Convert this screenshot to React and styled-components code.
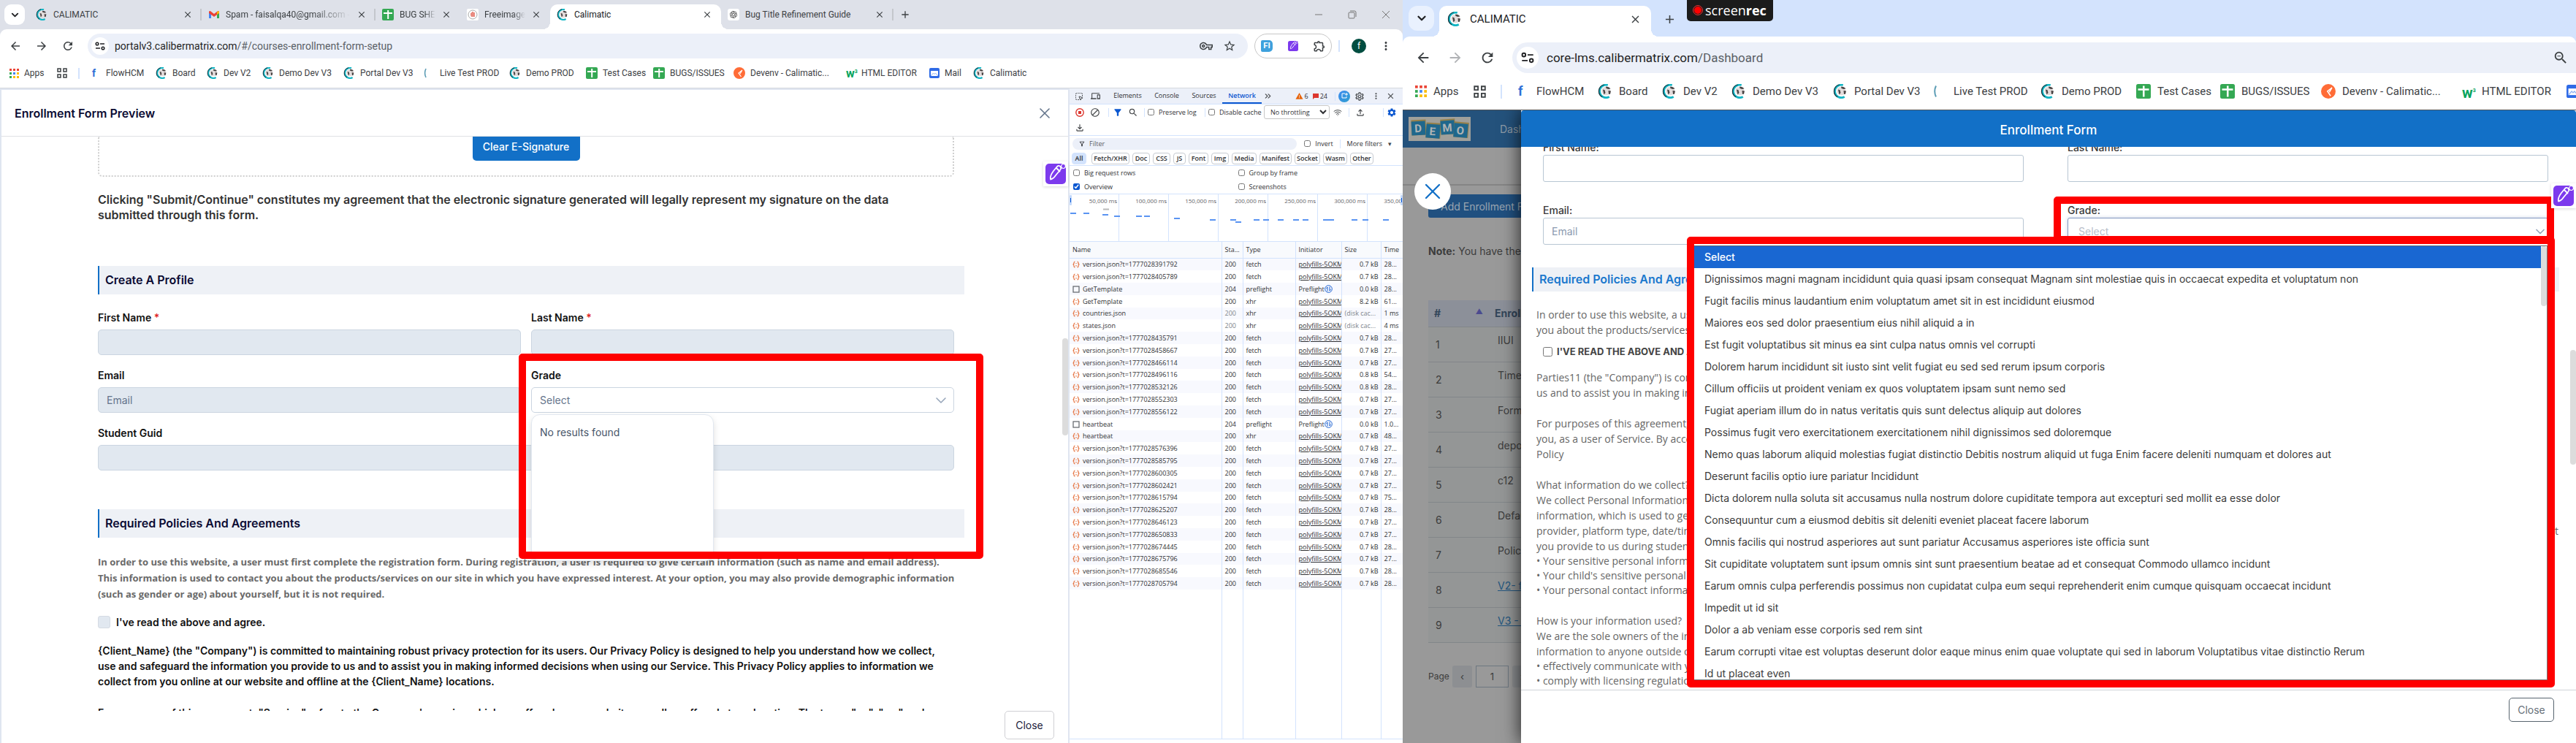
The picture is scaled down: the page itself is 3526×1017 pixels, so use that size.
import React from 'react';
import styled, { createGlobalStyle, css } from 'styled-components';
import {
  MdArrowBack,
  MdArrowForward,
  MdRefresh,
  MdStarBorder,
  MdOutlineExtension,
  MdMoreVert,
  MdClose,
  MdFilterAlt,
  MdOutlineFilterAlt,
  MdSearch,
  MdOutlineSettings,
  MdSettings,
  MdOutlineFileUpload,
  MdOutlineFileDownload,
  MdBlock,
  MdWarning,
  MdDevices,
  MdOutlineVpnKey,
  MdAdd,
  MdZoomOut,
} from 'react-icons/md';
import { RiOpenaiFill } from 'react-icons/ri';
import { ChevronDown, ChevronsRight, Wifi, SquareDashedMousePointer, X } from 'lucide-react';

const uiFont = "Roboto, 'Liberation Sans', sans-serif";
const appFont = "Inter, 'Liberation Sans', sans-serif";
const policyFont = "'Open Sans', 'Noto Sans', sans-serif";

const GlobalStyle = createGlobalStyle`
  * {
    margin: 0;
    padding: 0;
    box-sizing: border-box;
  }

  body {
    overflow: hidden;
    background: #fff;
    font-family: ${uiFont};
  }

  button, input, select {
    font: inherit;
    color: inherit;
  }

  button {
    background: none;
    border: none;
  }

  a {
    color: inherit;
    text-decoration: none;
  }

  svg {
    flex: none;
    display: block;
  }
`;

const Desktop = styled.div`
  display: grid;
  grid-template-columns: 1920fr 1606fr;
  height: 100vh;
`;

const Browser = styled.section`
  display: flex;
  flex-direction: column;
  min-width: 0;
  height: 100vh;
  overflow: hidden;
  color: #3c4043;
`;

/* ---------- browser chrome ---------- */

const TabStrip = styled.div`
  display: flex;
  align-items: stretch;
  position: relative;
  flex: none;
  height: ${p => (p.$large ? '50px' : '40px')};
  padding: ${p => (p.$large ? '8px 0 0 8px' : '6px 0 0 6px')};
  background: ${p => (p.$large ? '#d3e3fd' : '#dee1e9')};
  font-size: ${p => (p.$large ? '15px' : '12px')};
`;

const TabSearch = styled.button`
  display: flex;
  align-items: center;
  justify-content: center;
  flex: none;
  width: ${p => (p.$large ? '35px' : '28px')};
  height: ${p => (p.$large ? '34px' : '28px')};
  margin-right: ${p => (p.$large ? '7px' : '6px')};
  border-radius: ${p => (p.$large ? '12px' : '9px')};
  background: ${p => (p.$large ? '#e9f1fe' : '#fff')};
  color: #202124;
`;

const TabBox = styled.div`
  display: flex;
  align-items: center;
  gap: ${p => (p.$large ? '11px' : '8px')};
  position: relative;
  flex: none;
  width: ${p => p.$width}px;
  padding: ${p => (p.$large ? '0 13px 6px 11px' : '0 12px 6px 9px')};

  ${p => p.$divider && css`
    &::after {
      content: '';
      position: absolute;
      right: 0;
      top: 6px;
      width: 2px;
      height: 16px;
      background: #c4c7cc;
    }
  `}

  ${p => p.$active && css`
    background: #fff;
    border-radius: 10px 10px 0 0;
    color: #202124;

    &::before, &::after {
      content: '';
      position: absolute;
      bottom: 0;
      width: 10px;
      height: 10px;
    }
    &::before {
      left: -10px;
      background: radial-gradient(circle at 0 0, transparent 10px, #fff 10px);
    }
    &::after {
      right: -10px;
      background: radial-gradient(circle at 100% 0, transparent 10px, #fff 10px);
    }
  `}
`;

const TabTitle = styled.span`
  flex: 1;
  min-width: 0;
  overflow: hidden;
  white-space: nowrap;
  mask-image: ${p => (p.$fade ? 'linear-gradient(90deg, #000 70%, transparent)' : 'none')};
`;

const TabClose = styled.button`
  display: flex;
  color: #3c4043;
`;

const NewTab = styled.button`
  display: flex;
  align-items: center;
  padding: 0 ${p => (p.$large ? '16px' : '8px')} 6px;
`;

const WindowButtons = styled.div`
  display: flex;
  align-items: center;
  gap: 34px;
  margin-left: auto;
  padding: 0 17px 6px;
  color: #777;
`;

const ScreenRec = styled.div`
  position: absolute;
  left: 389px;
  top: 0;
  display: flex;
  align-items: center;
  gap: 3px;
  height: 29px;
  padding: 0 9px 2px 8px;
  border-radius: 0 0 5px 5px;
  background: #1b1b1b;
  color: #fff;
  font-family: ${policyFont};
  font-size: 18px;
`;

const ToolbarBack = styled.div`
  flex: none;
  background: ${p => (p.$large ? '#d3e3fd' : '#dee1e9')};
`;

const Toolbar = styled.div`
  display: flex;
  align-items: center;
  height: ${p => (p.$large ? '50px' : '40px')};
  padding: ${p => (p.$large ? '8px 0 0 17px' : '6px 14px 0 12px')};
  border-radius: 9px 9px 0 0;
  background: #fff;
`;

const NavButton = styled.button`
  display: flex;
  width: ${p => (p.$large ? '44px' : '36px')};
  color: ${p => (p.$off ? '#b0b2b5' : '#3c4043')};
`;

const Omnibox = styled.label`
  display: flex;
  align-items: center;
  flex: 1;
  height: ${p => (p.$large ? '42px' : '34px')};
  margin-left: ${p => (p.$large ? '1px' : '0')};
  padding: ${p => (p.$large ? '0 10px 0 6px' : '0 16px 0 5px')};
  border-radius: ${p => (p.$large ? '21px 0 0 21px' : '17px')};
  background: #ecf0f9;
  font-size: ${p => (p.$large ? '17px' : '14px')};
`;

const SiteInfo = styled.span`
  display: flex;
  align-items: center;
  justify-content: center;
  flex: none;
  width: ${p => (p.$large ? '30px' : '24px')};
  height: ${p => (p.$large ? '30px' : '24px')};
  margin-right: ${p => (p.$large ? '11px' : '8px')};
  border-radius: 50%;
  background: #fff;
`;

const Address = styled.span`
  flex: 1;
  color: #1f1f1f;
  white-space: nowrap;

  span {
    color: #5a5f66;
  }
`;

const OmniIcons = styled.span`
  display: flex;
  gap: 14px;
  color: #3c4043;
`;

const Extensions = styled.div`
  display: flex;
  align-items: center;
  justify-content: space-between;
  width: 106px;
  height: 34px;
  margin-left: 9px;
  padding: 0 7px 0 8px;
  border: 1px solid #c7c7c7;
  border-radius: 17px;
`;

const FiBadge = styled.span`
  width: 16px;
  height: 16px;
  border-radius: 2px 5px 5px 2px;
  background: #3ea1dd;
  color: #fff;
  font-size: 11px;
  font-weight: 700;
  line-height: 16px;
  text-align: center;
`;

const ToolbarRule = styled.span`
  width: 2px;
  height: 16px;
  margin: 0 16px 0 9px;
  background: #d3e3fd;
`;

const Avatar = styled.button`
  width: 20px;
  height: 20px;
  margin-right: 18px;
  border-radius: 50%;
  background: #004d40;
  color: #fff;
  font-size: 12px;
`;

const Bookmarks = styled.nav`
  display: flex;
  align-items: center;
  height: ${p => (p.$large ? '50px' : '40px')};
  padding-left: ${p => (p.$large ? '17px' : '13px')};
  overflow: hidden;
  background: #fff;
  font-size: ${p => (p.$large ? '15px' : '12px')};
`;

const Bookmark = styled.a`
  display: flex;
  align-items: center;
  gap: ${p => (p.$large ? '9px' : '7px')};
  flex: none;
  width: ${p => p.$width}px;
  white-space: nowrap;
`;

const BookmarkRule = styled.span`
  flex: none;
  width: 2px;
  height: ${p => (p.$large ? '19px' : '15px')};
  margin-right: ${p => (p.$large ? '22px' : '17px')};
  background: #d3e3fd;
`;

const LetterMark = styled.span`
  width: ${p => p.$size}px;
  color: ${p => p.$color};
  font-size: ${p => p.$size + 2}px;
  font-weight: 700;
  line-height: ${p => p.$size}px;

  sup {
    font-size: 7px;
  }
`;

const CalimaticLogo = ({ size = 16 }) => (
  <svg width={size} height={size} viewBox="0 0 16 16">
    <path d="M11 1.2A7 7 0 1 0 12.6 14" fill="none" stroke="#12b5c4" strokeWidth="2.2" />
    <path d="M7 .8A7.2 7.2 0 0 0 5 14.2" fill="none" stroke="#17343c" strokeWidth="1" />
    <circle cx="9" cy="7.6" r="4.8" fill="#e3dcdc" />
    <path d="M9 2.8c2 0 4 .8 5 2.4l-2.6.4L9 4.6zM11.6 7.2l2.8.4-.8 3.4-1.6.2zM5.6 6l2 .6.8 3-1.6 2z" fill="#4a4444" />
  </svg>
);

const SheetsLogo = ({ size = 16 }) => (
  <svg width={size} height={size} viewBox="0 0 16 16">
    <rect width="16" height="16" rx="2" fill="#34a853" />
    <path d="M2 6h12M8.200 2v12" stroke="#fff" strokeWidth="2" />
  </svg>
);

const GmailLogo = () => (
  <svg width="16" height="16" viewBox="0 0 16 16">
    <path d="M1 4v9h3V7z" fill="#4285f4" />
    <path d="M15 4v9h-3V7z" fill="#34a853" />
    <path d="M1 3.500 2.800 3 8 7l5.200-4L15 3.500V6l-7 5-7-5z" fill="#ea4335" />
    <path d="M12 4.500 14 3l1 1v2l-3 2z" fill="#fbbc04" />
  </svg>
);

const HandLogo = () => (
  <svg width="16" height="16" viewBox="0 0 16 16">
    <rect width="16" height="16" rx="2" fill="#fff" />
    <circle cx="8" cy="8" r="6" fill="none" stroke="#aaa" />
    <path d="M5 6h1V5h1V4h2v1h2v6H6L5 9z" fill="#e98b80" />
  </svg>
);

const GptLogo = () => (
  <svg width="16" height="16" viewBox="0 0 16 16">
    <rect width="16" height="16" rx="3" fill="#fff" />
    <RiOpenaiFill x="2" y="2" size={12} color="#333" />
  </svg>
);

const PostmanLogo = ({ size = 16 }) => (
  <svg width={size} height={size} viewBox="0 0 16 16">
    <circle cx="8" cy="8" r="8" fill="#ff6c37" />
    <path d="m12 4-5 4 3.500 5M12 4l-3 5" fill="none" stroke="#fff" strokeWidth="1.200" />
  </svg>
);

const MailLogo = ({ size = 14 }) => (
  <svg width={size} height={size} viewBox="0 0 14 14">
    <rect width="14" height="14" rx="2" fill="#2f6be6" />
    <path d="M2 4h10v7H2z" fill="#fff" />
    <path d="m2 11 3.500-4L7 8.500 8.500 7l3.500 4" fill="none" stroke="#8fb2f5" />
  </svg>
);

const HalfLogo = ({ size = 16 }) => (
  <svg width={size} height={size} viewBox="0 0 16 16">
    <path d="M4 2a14 14 0 0 0 0 12" fill="none" stroke="#5d9db5" strokeWidth="1.600" />
  </svg>
);

const AppsLogo = ({ size = 13 }) => (
  <svg width={size} height={size} viewBox="0 0 13 13">
    {['#ea4335', '#ea4335', '#ea4335', '#34a853', '#4285f4', '#fbbc04', '#34a853', '#fbbc04', '#fbbc04'].map((c, i) => (
      <rect key={i} x={(i % 3) * 5} y={Math.floor(i / 3) * 5} width="3" height="3" fill={c} />
    ))}
  </svg>
);

const GridLogo = ({ size = 14 }) => (
  <svg width={size} height={size} viewBox="0 0 14 14" fill="none" stroke="#3c4043" strokeWidth="1.500">
    <path d="M1 1h4v4H1zM9 1h4v4H9zM1 9h4v4H1zM9 9h4v4H9z" />
  </svg>
);

const TuneLogo = ({ size = 14 }) => (
  <svg width={size} height={size} viewBox="0 0 14 14" fill="none" stroke="#202124" strokeWidth="1.500">
    <circle cx="3" cy="4" r="1.800" />
    <path d="M7 4h6M1 10h6" />
    <circle cx="11" cy="10" r="1.800" />
  </svg>
);

const PenLogo = ({ size }) => (
  <svg width={size} height={size} viewBox="0 0 28 28">
    <rect width="28" height="28" rx="5" fill="#7c3aed" />
    <path d="M7 21.500C6 18 8 14 11 10l5-6c2-2 4-1 5 1s0 3-2 5l-5 6c-2 3-4 5-7 5.500zM15 6l5 5" fill="none" stroke="#fff" strokeWidth="1.800" strokeLinejoin="round" />
    <circle cx="24.500" cy="3.500" r="3" fill="#7c3aed" stroke="#fff" strokeWidth="1.200" />
  </svg>
);

const bookmarks = [
  { label: 'FlowHCM', icon: 'flow', w: 87 },
  { label: 'Board', icon: 'cali', w: 70 },
  { label: 'Dev V2', icon: 'cali', w: 76 },
  { label: 'Demo Dev V3', icon: 'cali', w: 111 },
  { label: 'Portal Dev V3', icon: 'cali', w: 109 },
  { label: 'Live Test PROD', icon: 'half', w: 118 },
  { label: 'Demo PROD', icon: 'cali', w: 105 },
  { label: 'Test Cases', icon: 'sheet', w: 92 },
  { label: 'BUGS/ISSUES', icon: 'sheet', w: 110 },
  { label: 'Devenv - Calimatic...', icon: 'postman', w: 154 },
  { label: 'HTML EDITOR', icon: 'w3', w: 114 },
  { label: 'Mail', icon: 'mail', w: 60 },
  { label: 'Calimatic', icon: 'cali', w: 80 },
];

function BookmarkIcon({ icon, size }) {
  if (icon === 'flow') return <LetterMark $size={size - 4} $color="#2f6fd6">f</LetterMark>;
  if (icon === 'w3') return <LetterMark $size={size - 2} $color="#04a35b">w<sup>3</sup></LetterMark>;
  if (icon === 'sheet') return <SheetsLogo size={size} />;
  if (icon === 'postman') return <PostmanLogo size={size} />;
  if (icon === 'mail') return <MailLogo size={size - 2} />;
  if (icon === 'half') return <HalfLogo size={size} />;
  return <CalimaticLogo size={size} />;
}

function BookmarkBar({ large }) {
  return (
    <Bookmarks $large={large}>
      <Bookmark href="#apps" $large={large} $width={large ? 80 : 65}>
        <AppsLogo size={large ? 16 : 13} /> Apps
      </Bookmark>
      <Bookmark href="#groups" $large={large} $width={large ? 37 : 29} aria-label="Tab groups">
        <GridLogo size={large ? 17 : 14} />
      </Bookmark>
      <BookmarkRule $large={large} />
      {bookmarks.map(b => (
        <Bookmark key={b.label} href="#bookmark" $large={large} $width={large ? Math.round(b.w * 1.25) : b.w}>
          <BookmarkIcon icon={b.icon} size={large ? 20 : 16} />
          {b.label}
        </Bookmark>
      ))}
    </Bookmarks>
  );
}

function Tab({ icon, title, width, active, divider, fade, large }) {
  return (
    <TabBox $width={width} $active={active} $divider={divider} $large={large}>
      {icon}
      <TabTitle $fade={fade}>{title}</TabTitle>
      <TabClose aria-label="Close tab"><MdClose size={large ? 17 : 14} /></TabClose>
    </TabBox>
  );
}

/* ---------- preview page ---------- */

const Page = styled.div`
  display: grid;
  grid-template-columns: 1464fr 456fr;
  flex: 1;
  min-height: 0;
  border-top: 1px solid #d5d8dd;
`;

const Preview = styled.main`
  display: flex;
  flex-direction: column;
  position: relative;
  min-width: 0;
  min-height: 0;
  border: 2px solid #dfe5f0;
  border-bottom: none;
  background: #fff;
  font-family: ${appFont};
`;

const PreviewHeader = styled.header`
  display: flex;
  align-items: center;
  justify-content: space-between;
  flex: none;
  height: 64px;
  padding: 0 20px 0 18px;
  border-bottom: 1px solid #dfe1e5;
  color: #0b0b33;

  h1 {
    font-size: 16px;
    font-weight: 600;
  }

  button {
    display: flex;
    color: #64748b;
  }
`;

const PreviewBody = styled.div`
  flex: 1;
  min-height: 0;
  overflow: hidden;
  padding: 0 142px 0 132px;
`;

const Inner = styled.div`
  margin-right: 14px;
`;

const SignatureBox = styled.div`
  display: flex;
  justify-content: center;
  align-items: flex-start;
  height: 55px;
  border: 2px dotted #cfcfcf;
  border-top: none;
  border-radius: 0 0 6px 6px;
`;

const ClearButton = styled.button`
  width: 147px;
  height: 33px;
  padding-bottom: 6px;
  border-radius: 0 0 5px 5px;
  background: #1270c7;
  color: #fff;
  font-size: 14px;
  font-weight: 500;
`;

const Consent = styled.p`
  margin-top: 21px;
  color: #333;
  font-size: 16px;
  font-weight: 600;
  line-height: 21px;
  white-space: nowrap;
`;

const SectionTitle = styled.h2`
  height: ${p => (p.$large ? '33px' : '39px')};
  margin-top: ${p => p.$top}px;
  padding-left: 8px;
  border-left: 2px solid #1270c7;
  background: #eef1f6;
  color: ${p => (p.$large ? '#1b78cd' : '#0b0b33')};
  font-size: 16px;
  font-weight: 600;
  line-height: ${p => (p.$large ? '33px' : '38px')};
  white-space: nowrap;
`;

const FieldGrid = styled.div`
  display: grid;
  grid-template-columns: 1fr 1fr;
  gap: 18px 14px;
  margin-top: 22px;
`;

const Field = styled.div`
  position: relative;
  grid-column: ${p => (p.$wide ? '1 / -1' : 'auto')};
`;

const Label = styled.label`
  display: block;
  margin-bottom: 6px;
  color: #111;
  font-size: 14px;
  font-weight: 600;
  line-height: 20px;

  span {
    color: #e02424;
  }
`;

const TextInput = styled.input`
  display: block;
  width: 100%;
  height: 35px;
  padding: 0 11px;
  border: 1px solid #cbd5e1;
  border-radius: 5px;
  background: #e1e8f0;
  font-size: 14px;

  &::placeholder {
    color: #64748b;
  }
`;

const SelectWrap = styled.div`
  display: flex;
  align-items: center;
  height: 35px;
  padding-right: 5px;
  border: 1px solid #cbd5e1;
  border-radius: 5px;
  background: #fff;
  color: #94a3b8;

  select {
    flex: 1;
    height: 100%;
    padding-left: 11px;
    appearance: none;
    border: none;
    background: none;
    color: #64748b;
    font-size: 14px;
  }
`;

const EmptyMenu = styled.div`
  position: absolute;
  z-index: 1;
  top: 63px;
  left: 0;
  width: 250px;
  height: 201px;
  padding: 14px 11px;
  border: 1px solid #e2e8f0;
  border-radius: 12px;
  background: #fff;
  box-shadow: 0 4px 10px rgba(0, 0, 0, 0.13);
  color: #475569;
  font-size: 14px;
  line-height: 20px;
`;

const Highlight = styled.div`
  position: absolute;
  z-index: 2;
  top: -20px;
  left: -17px;
  right: -40px;
  height: 281px;
  border: 10px solid #f00;
  border-radius: 5px;
  pointer-events: none;
`;

const Policy = styled.p`
  margin-top: 22px;
  color: #6a6a6a;
  font-family: ${policyFont};
  font-size: 13px;
  font-weight: 700;
  line-height: 22px;
  white-space: nowrap;
`;

const Agree = styled.label`
  display: flex;
  align-items: center;
  gap: 8px;
  margin-top: 19px;
  height: 17px;
  color: #111;
  font-size: 14px;
  font-weight: 600;

  input {
    width: 17px;
    height: 17px;
    appearance: none;
    border: 1px solid #d5dbe3;
    border-radius: 3px;
    background: #e1e8f0;
  }
`;

const ClientText = styled.p`
  margin-top: ${p => p.$top}px;
  color: #111;
  font-size: 14px;
  font-weight: 600;
  line-height: 21px;
  white-space: nowrap;
`;

const PreviewFooter = styled.footer`
  display: flex;
  justify-content: flex-end;
  flex: none;
  padding: 0 19px 5px;
`;

const CloseButton = styled.button`
  width: ${p => (p.$large ? '62px' : '68px')};
  height: ${p => (p.$large ? '33px' : '39px')};
  border: 1px solid ${p => (p.$large ? '#58656f' : '#d0d0d4')};
  border-radius: 5px;
  color: ${p => (p.$large ? '#667078' : '#1b1b3a')};
  font-size: 14px;
`;

const Thumb = styled.span`
  position: absolute;
  right: 0;
  top: ${p => p.$top}px;
  width: 8px;
  height: ${p => p.$height}px;
  border-radius: 4px;
  background: #dcdcdc;
`;

const PenButton = styled.button`
  position: absolute;
  z-index: 3;
  right: 0;
  top: ${p => p.$top}px;
  padding: 3px;
  background: #fff;
  box-shadow: 0 1px 4px rgba(0, 0, 0, 0.15);
`;

function PreviewPage() {
  return (
    <Preview>
      <PreviewHeader>
        <h1>Enrollment Form Preview</h1>
        <button aria-label="Close preview"><X size={24} strokeWidth={1.6} /></button>
      </PreviewHeader>
      <PreviewBody>
        <Inner>
          <SignatureBox>
            <ClearButton>Clear E-Signature</ClearButton>
          </SignatureBox>
          <Consent>
            Clicking "Submit/Continue" constitutes my agreement that the electronic signature generated will legally represent my signature on the data<br />
            submitted through this form.
          </Consent>
        </Inner>
        <SectionTitle $top={59}>Create A Profile</SectionTitle>
        <Inner>
          <FieldGrid>
            <Field>
              <Label htmlFor="first">First Name <span>*</span></Label>
              <TextInput id="first" />
            </Field>
            <Field>
              <Label htmlFor="last">Last Name <span>*</span></Label>
              <TextInput id="last" />
            </Field>
            <Field>
              <Label htmlFor="email">Email</Label>
              <TextInput id="email" placeholder="Email" />
            </Field>
            <Field>
              <Label htmlFor="grade">Grade</Label>
              <SelectWrap>
                <select id="grade"><option>Select</option></select>
                <ChevronDown size={24} strokeWidth={1.5} />
              </SelectWrap>
              <EmptyMenu>No results found</EmptyMenu>
              <Highlight />
            </Field>
            <Field $wide>
              <Label htmlFor="guid">Student Guid</Label>
              <TextInput id="guid" />
            </Field>
          </FieldGrid>
        </Inner>
        <SectionTitle $top={53}>Required Policies And Agreements</SectionTitle>
        <Inner>
          <Policy>
            In order to use this website, a user must first complete the registration form. During registration, a user is required to give certain information (such as name and email address).<br />
            This information is used to contact you about the products/services on our site in which you have expressed interest. At your option, you may also provide demographic information<br />
            (such as gender or age) about yourself, but it is not required.
          </Policy>
          <Agree><input type="checkbox" /> I've read the above and agree.</Agree>
          <ClientText $top={20}>
            {'{Client_Name}'} (the "Company") is committed to maintaining robust privacy protection for its users. Our Privacy Policy is designed to help you understand how we collect,<br />
            use and safeguard the information you provide to us and to assist you in making informed decisions when using our Service. This Privacy Policy applies to information we<br />
            collect from you online at our website and offline at the {'{Client_Name}'} locations.
          </ClientText>
          <ClientText $top={22}>
            For purposes of this agreement, "Service" refers to the Company's service which we offered on our website as well as offered at our location. The terms "us", "we" and
          </ClientText>
        </Inner>
      </PreviewBody>
      <PreviewFooter><CloseButton>Close</CloseButton></PreviewFooter>
      <Thumb $top={340} $height={133} />
      <PenButton $top={98} aria-label="Annotate"><PenLogo size={28} /></PenButton>
    </Preview>
  );
}

/* ---------- dev tools ---------- */

const Tools = styled.aside`
  display: flex;
  flex-direction: column;
  min-width: 0;
  min-height: 0;
  margin-bottom: 5px;
  border-bottom: 1px solid #d3e3fd;
  background: #fff;
  color: #303134;
  font-family: ${policyFont};
  font-size: 9px;
`;

const ToolRow = styled.div`
  display: flex;
  align-items: center;
  flex: none;
  height: ${p => p.$height}px;
  padding: 0 8px;
  background: ${p => (p.$tinted ? '#ecf0f9' : '#fff')};
  border-bottom: ${p => (p.$open ? 'none' : '1px solid #d3e3fd')};
  white-space: nowrap;
`;

const ToolIcon = styled.button`
  display: flex;
  justify-content: center;
  flex: none;
  width: ${p => p.$width || 22}px;
  color: ${p => p.$color || '#44474a'};
`;

const ToolRule = styled.span`
  flex: none;
  width: 1px;
  height: 12px;
  margin: 0 ${p => p.$gap || 4}px;
  background: #d3e3fd;
`;

const ToolTab = styled.button`
  flex: none;
  width: ${p => p.$width}px;
  height: 20px;
  border-bottom: 2px solid ${p => (p.$active ? '#0b57d0' : 'transparent')};
  color: ${p => (p.$active ? '#0b57d0' : '#303134')};
  font-size: 9px;
  font-weight: ${p => (p.$active ? 600 : 400)};
`;

const Count = styled.span`
  display: flex;
  align-items: center;
  gap: 2px;
  margin-right: 6px;
`;

const Spacer = styled.span`
  flex: 1;
`;

const AiBadge = styled.button`
  display: flex;
  align-items: center;
  justify-content: center;
  flex: none;
  width: 16px;
  height: 16px;
  margin-right: 2px;
  border-radius: 50%;
  background: linear-gradient(135deg, #3b8af0, #2f9fd0);
`;

const Check = styled.label`
  display: flex;
  align-items: center;
  gap: 6px;
  flex: none;
  width: ${p => (p.$width ? `${p.$width}px` : 'auto')};

  input {
    flex: none;
    width: 9px;
    height: 9px;
    accent-color: #0b57d0;
  }
`;

const Throttle = styled.select`
  flex: none;
  width: 90px;
  height: 19px;
  padding-left: 4px;
  border: 1px solid #c7c7c7;
  border-radius: 3px;
  background: #fff;
  font-size: 9px;
`;

const FilterBox = styled.label`
  display: flex;
  align-items: center;
  gap: 5px;
  flex: 1;
  height: 16px;
  margin: 0 10px 0 -4px;
  padding-left: 8px;
  border-radius: 8px;
  background: #ecf0f9;

  input {
    flex: 1;
    min-width: 0;
    border: none;
    background: none;
  }

  input::placeholder {
    color: #5a5d61;
  }
`;

const Chips = styled.div`
  display: flex;
  align-items: center;
  gap: 4px;
  flex: none;
  height: 20px;
  padding: 0 3px;
  border-bottom: 1px solid #d3e3fd;
`;

const Chip = styled.button`
  width: ${p => p.$width}px;
  height: 16px;
  margin-right: ${p => (p.$on ? '3px' : '0')};
  border: 1px solid ${p => (p.$on ? '#d3e3fd' : '#c7cbd1')};
  border-radius: 4px;
  background: ${p => (p.$on ? '#d3e3fd' : '#fff')};
  font-size: 9px;
  font-weight: 600;
  line-height: 13px;
  text-align: center;
`;

const Options = styled.div`
  display: grid;
  grid-template-columns: 1fr 1fr;
  align-items: center;
  flex: none;
  height: 39px;
  padding-left: 5px;
  border-bottom: 1px solid #d3e3fd;
`;

const Timeline = styled.div`
  display: grid;
  grid-template-columns: repeat(7, 68px);
  position: relative;
  flex: none;
  height: 65px;
  overflow: hidden;
  border-bottom: 1px solid #d3e3fd;
`;

const Tick = styled.span`
  padding: 3px 2px;
  border-right: 1px solid #d3e3fd;
  color: #5f6368;
  font-size: 8px;
  text-align: right;
`;

const TimelineBars = styled.svg`
  position: absolute;
  left: 0;
  top: 0;
`;

const RequestTable = styled.table`
  flex: none;
  width: 100%;
  table-layout: fixed;
  border-collapse: collapse;
  font-size: 9px;

  th {
    height: 22px;
    border-bottom: 1px solid #d3e3fd;
    background: #f8fafd;
    font-weight: 400;
    text-align: left;
  }

  th, td {
    padding: 0 0 0 4px;
    overflow: hidden;
    border-right: 1px solid #d3e3fd;
    white-space: nowrap;
  }

  th:last-child, td:last-child {
    border-right: none;
  }
`;

const RequestRow = styled.tr`
  height: 17px;
  background: ${p => (p.$odd ? '#f8f9fe' : '#fff')};
  line-height: 14px;

  &:nth-child(5n) {
    height: 16px;
  }

  &:last-child {
    height: 300px;
    background: #fff;
  }

  td:nth-child(5) {
    padding-right: 3px;
    color: ${p => (p.$cached ? '#80868b' : 'inherit')};
    text-align: ${p => (p.$cached ? 'left' : 'right')};
  }

  td:nth-child(2) {
    color: ${p => (p.$cached ? '#80868b' : 'inherit')};
  }
`;

const RequestName = styled.span`
  display: flex;
  align-items: center;
  gap: 4px;
`;

const Initiator = styled.a`
  display: flex;
  align-items: center;
  text-decoration: ${p => (p.$plain ? 'none' : 'underline')};
`;

const TableClip = styled.div`
  flex: 1;
  min-height: 0;
  overflow: hidden;
`;

const JsonMark = () => (
  <svg width="10" height="10" viewBox="0 0 10 10" fill="none" stroke="#e46a34" strokeWidth="1.200">
    <path d="M3.500 1Q2 1 2 3T.5 5Q2 5 2 7t1.500 2M6.500 1Q8 1 8 3t1.500 2Q8 5 8 7T6.500 9M5 3v1M5 6v1.500" />
  </svg>
);

const DocMark = () => (
  <svg width="10" height="10" viewBox="0 0 10 10">
    <rect x="1" y="1" width="8" height="8" fill="none" stroke="#5f6368" strokeWidth="1.200" />
  </svg>
);

const PreflightMark = () => (
  <svg width="11" height="11" viewBox="0 0 11 11" fill="none" stroke="#1a5fd0">
    <circle cx="5.500" cy="5.500" r="4.800" />
    <path d="M4 8.500V3L2.500 5M7 2.500V8l1.500-2" />
  </svg>
);

const ver = (t, size = '0.7 kB', time = '27...') => ({ name: `version.json?t=${t}`, status: 200, type: 'fetch', size, time });

const requests = [
  ver('1777028391792', '0.7 kB', '28...'),
  ver('1777028405789', '0.7 kB', '28...'),
  { name: 'GetTemplate', status: 204, type: 'preflight', size: '0.0 kB', time: '28...' },
  { name: 'GetTemplate', status: 200, type: 'xhr', size: '8.2 kB', time: '61...' },
  { name: 'countries.json', status: 200, type: 'xhr', size: '(disk cac...', time: '1 ms', cached: true },
  { name: 'states.json', status: 200, type: 'xhr', size: '(disk cac...', time: '4 ms', cached: true },
  ver('1777028435791', '0.7 kB', '28...'),
  ver('1777028458667'),
  ver('1777028466114'),
  ver('1777028496116', '0.8 kB', '54...'),
  ver('1777028532126', '0.8 kB', '28...'),
  ver('1777028552303'),
  ver('1777028556122'),
  { name: 'heartbeat', status: 204, type: 'preflight', size: '0.0 kB', time: '1.0...' },
  { name: 'heartbeat', status: 200, type: 'xhr', size: '0.7 kB', time: '48...' },
  ver('1777028576396'),
  ver('1777028585795'),
  ver('1777028600305'),
  ver('1777028602421'),
  ver('1777028615794', '0.7 kB', '75...'),
  ver('1777028625207', '0.7 kB', '28...'),
  ver('1777028646123'),
  ver('1777028650833'),
  ver('1777028674445', '0.7 kB', '28...'),
  ver('1777028675796'),
  ver('1777028685546', '0.7 kB', '28...'),
  ver('1777028705794', '0.7 kB', '28...'),
];

const chips = [
  ['Fetch/XHR', 52], ['Doc', 24], ['CSS', 24], ['JS', 17], ['Font', 27], ['Img', 24],
  ['Media', 34], ['Manifest', 44], ['Socket', 35], ['Wasm', 33], ['Other', 32],
];

const bars = [
  [1, 26], [19, 26], [45, 28], [61, 30], [91, 30], [102, 30], [143, 33], [192, 35], [220, 35], [227, 38],
  [252, 35], [265, 35], [285, 35], [306, 35], [319, 35], [347, 35], [354, 35], [386, 35], [401, 35], [429, 35],
];

function DevTools() {
  return (
    <Tools>
      <ToolRow $height={22} $tinted>
        <ToolIcon $width={10}><SquareDashedMousePointer size={12} /></ToolIcon>
        <ToolIcon $width={34}><MdDevices size={13} /></ToolIcon>
        <ToolTab $width={55}>Elements</ToolTab>
        <ToolTab $width={52}>Console</ToolTab>
        <ToolTab $width={50}>Sources</ToolTab>
        <ToolTab $width={54} $active>Network</ToolTab>
        <ToolIcon $width={16}><ChevronsRight size={13} /></ToolIcon>
        <Spacer />
        <Count><MdWarning size={11} color="#e8640a" /> 6</Count>
        <Count>
          <svg width="8" height="8" viewBox="0 0 8 8"><path d="M0 0h8v6H2L0 8z" fill="#dc362e" /></svg> 24
        </Count>
        <ToolRule />
        <AiBadge aria-label="AI assistance">
          <svg width="9" height="9" viewBox="0 0 9 9"><path d="M5 1H1v6h6V5M7 0v4M5 2h4" fill="none" stroke="#fff" /></svg>
        </AiBadge>
        <ToolIcon><MdOutlineSettings size={14} /></ToolIcon>
        <ToolIcon><MdMoreVert size={13} /></ToolIcon>
        <ToolIcon $width={18}><MdClose size={13} /></ToolIcon>
      </ToolRow>
      <ToolRow $height={21} $open>
        <ToolIcon $width={11} $color="#dc362e">
          <svg width="12" height="12" viewBox="0 0 12 12"><circle cx="6" cy="6" r="5.200" fill="none" stroke="#dc362e" strokeWidth="1.400" /><path d="M4 4h4v4H4z" fill="#dc362e" /></svg>
        </ToolIcon>
        <ToolIcon $width={32}><MdBlock size={14} /></ToolIcon>
        <ToolRule $gap={2} />
        <ToolIcon $width={20} $color="#0b57d0"><MdFilterAlt size={14} /></ToolIcon>
        <ToolIcon><MdSearch size={14} /></ToolIcon>
        <ToolRule />
        <Check $width={74}><input type="checkbox" /> Preserve log</Check>
        <ToolRule />
        <Check $width={76}><input type="checkbox" /> Disable cache</Check>
        <Throttle aria-label="Throttling"><option>No throttling</option></Throttle>
        <ToolIcon><Wifi size={12} /></ToolIcon>
        <ToolRule />
        <ToolIcon><MdOutlineFileUpload size={14} /></ToolIcon>
        <Spacer />
        <ToolRule />
        <ToolIcon $width={14} $color="#0b57d0"><MdSettings size={14} /></ToolIcon>
      </ToolRow>
      <ToolRow $height={22}>
        <ToolIcon $width={11}><MdOutlineFileDownload size={14} /></ToolIcon>
      </ToolRow>
      <ToolRow $height={21} $open>
        <FilterBox>
          <MdOutlineFilterAlt size={10} />
          <input placeholder="Filter" aria-label="Filter" />
        </FilterBox>
        <Check><input type="checkbox" /> Invert</Check>
        <ToolRule $gap={9} />
        <span>More filters</span>
        <ToolIcon $width={20}>▾</ToolIcon>
      </ToolRow>
      <Chips>
        <Chip $width={20} $on>All</Chip>
        {chips.map(([name, w]) => <Chip key={name} $width={w}>{name}</Chip>)}
      </Chips>
      <Options>
        <Check><input type="checkbox" /> Big request rows</Check>
        <Check><input type="checkbox" /> Group by frame</Check>
        <Check><input type="checkbox" defaultChecked /> Overview</Check>
        <Check><input type="checkbox" /> Screenshots</Check>
      </Options>
      <Timeline>
        {['50,000 ms', '100,000 ms', '150,000 ms', '200,000 ms', '250,000 ms', '300,000 ms', '350,000 ms'].map(t => (
          <Tick key={t}>{t}</Tick>
        ))}
        <TimelineBars width="456" height="64" viewBox="0 0 456 64">
          <path d="M46 20.500h8" stroke="#b8b8b8" strokeWidth="2" />
          {bars.map(([x, y], i) => <rect key={i} x={x} y={y - 1} width="8" height="2" fill="#5a94f2" />)}
          <rect x="0" y="1" width="3" height="14" rx="1" fill="#c4dafc" />
          <rect x="453" y="1" width="3" height="14" rx="1" fill="#c4dafc" />
          <path d="M1.500 5v6M454.500 5v6" stroke="#0b57d0" />
        </TimelineBars>
      </Timeline>
      <TableClip>
        <RequestTable>
          <colgroup>
            <col /><col width="29" /><col width="72" /><col width="63" /><col width="54" /><col width="30" />
          </colgroup>
          <thead>
            <tr><th>Name</th><th>Sta...</th><th>Type</th><th>Initiator</th><th>Size</th><th>Time</th></tr>
          </thead>
          <tbody>
            {requests.map((r, i) => (
              <RequestRow key={i} $odd={i % 2 === 0} $cached={r.cached}>
                <td><RequestName>{r.type === 'preflight' ? <DocMark /> : <JsonMark />}{r.name}</RequestName></td>
                <td>{r.status}</td>
                <td>{r.type}</td>
                <td>
                  {r.type === 'preflight'
                    ? <Initiator href="#initiator" $plain>Preflight <PreflightMark /></Initiator>
                    : <Initiator href="#initiator">polyfills-5OKM</Initiator>}
                </td>
                <td>{r.size}</td>
                <td>{r.time}</td>
              </RequestRow>
            ))}
            <RequestRow><td /><td /><td /><td /><td /><td /></RequestRow>
          </tbody>
        </RequestTable>
      </TableClip>
    </Tools>
  );
}

/* ---------- dashboard with the enrollment panel ---------- */

const Dashboard = styled.div`
  position: relative;
  flex: 1;
  min-height: 0;
  overflow: hidden;
  border-top: 1px solid #555;
  background: #999;
  color: #3c3c3c;
  font-family: ${appFont};
  font-size: 14px;
`;

const SiteHeader = styled.div`
  display: flex;
  align-items: center;
  gap: 40px;
  height: 51px;
  padding-left: 8px;
  background: #24527c;
  color: #8d9aa6;
`;

const SubHeader = styled.div`
  height: 52px;
  border-bottom: 2px solid #858585;
`;

const DashBody = styled.div`
  width: 600px;
  padding: 12px 0 0 35px;
`;

const AddButton = styled.button`
  display: block;
  width: 300px;
  height: 32px;
  padding-left: 17px;
  border-radius: 3px;
  background: #205080;
  color: #9aa5b0;
  font-size: 14px;
  text-align: left;
`;

const Note = styled.p`
  margin: 36px 0 57px;
  line-height: 20px;
`;

const FormsTable = styled.table`
  width: 100%;
  table-layout: fixed;
  border-collapse: collapse;

  th {
    height: 36px;
    padding: 0 8px;
    background: #8c9099;
    color: #33465a;
    text-align: left;
  }

  th span {
    float: right;
    color: #4b4b8f;
    font-size: 10px;
  }

  td {
    height: 48px;
    padding: 0 10px;
    border-top: 1px solid #828689;
    border-bottom: 1px solid #828689;
    background: #949696;
  }

  td:last-child {
    padding: 0 12px 12px;
  }

  a {
    color: #24567f;
    text-decoration: underline;
  }
`;

const Pager = styled.div`
  display: flex;
  align-items: center;
  gap: 5px;
  margin-top: 31px;
  font-size: 13px;

  span {
    width: 28px;
    font-size: 12px;
  }

  button, input {
    width: 27px;
    height: 30px;
    border-radius: 3px;
    background: #8d8f92;
  }

  input {
    width: 45px;
    border: 1px solid #6d7780;
    border-radius: 0;
    background: #999;
    text-align: center;
  }
`;

const RoundClose = styled.button`
  position: absolute;
  left: 16px;
  top: 86px;
  display: flex;
  align-items: center;
  justify-content: center;
  width: 50px;
  height: 50px;
  border-radius: 50%;
  background: #fff;
  color: #1270c7;
`;

const Panel = styled.section`
  position: absolute;
  left: 162px;
  top: 0;
  right: 0;
  bottom: 0;
  display: flex;
  flex-direction: column;
  background: #fff;
  box-shadow: 0 0 24px rgba(0, 0, 0, 0.8);
`;

const PanelHeader = styled.header`
  flex: none;
  height: 50px;
  padding-top: 4px;
  border-radius: 4px 4px 0 0;
  background: #1270c7;
  color: #fff;
  font-size: 17px;
  font-weight: 500;
  line-height: 46px;
  text-align: center;
`;

const PanelBody = styled.div`
  flex: 1;
  min-height: 0;
  overflow: hidden;
`;

const PanelGrid = styled.div`
  display: grid;
  grid-template-columns: 1fr 1fr;
  gap: 29px 60px;
  margin: -9px 38px 0 30px;
`;

const PanelLabel = styled(Label)`
  margin-bottom: 0;
  color: #3a3a3a;
  font-weight: 500;
`;

const PanelInput = styled(TextInput)`
  height: 37px;
  border-radius: 3px;
  border-color: #b8c6d3;
  background: #fff;

  &::placeholder {
    color: #8c9bb0;
  }
`;

const PanelSelect = styled(SelectWrap)`
  height: 37px;
  padding-right: 0;
  border-radius: 3px;
  border-color: #8499c0;
  box-shadow: 0 0 5px #c9d3e6;

  select {
    padding-left: 14px;
    color: #b9c0ca;
  }
`;

const GradeFrame = styled.div`
  position: absolute;
  top: -9px;
  left: -19px;
  right: -8px;
  bottom: 2px;
  border: 10px solid #f00;
  border-radius: 5px;
  pointer-events: none;
`;

const ListFrame = styled.div`
  position: absolute;
  z-index: 2;
  top: 46px;
  right: -9px;
  width: 1188px;
  height: 617px;
  padding-top: 2px;
  border: 10px solid #f00;
  border-radius: 5px;
  background: #fff;
`;

const GradeList = styled.ul`
  position: relative;
  height: 595px;
  overflow: hidden;
  border-top: 1px solid #666;
  border-right: 1px solid #777;
  border-bottom: 1px solid #777;
  color: #3b3b3b;
  font-size: 14px;
  line-height: 30px;
  list-style: none;

  li {
    margin-right: 8px;
    padding-left: 14px;
    white-space: nowrap;
  }

  li[aria-selected='true'] {
    background: #1967d2;
    color: #fff;
    font-weight: 500;
  }
`;

const Inset = styled.div`
  margin: 0 23px 0 15px;
`;

const Terms = styled.div`
  margin: ${p => p.$top}px 24px 0 21px;
  color: #666;
  font-family: ${policyFont};
  font-size: 14px;
  line-height: 21px;
  white-space: nowrap;

  ul {
    line-height: 20px;
    list-style: none;
  }
`;

const SplitLine = styled.div`
  display: flex;
  justify-content: space-between;
`;

const PanelCheck = styled.label`
  display: flex;
  align-items: center;
  gap: 6px;
  height: 20px;
  margin: 9px 0 0 30px;
  color: #444;
  font-size: 13px;
  font-weight: 700;

  input {
    width: 13px;
    height: 13px;
  }
`;

const PanelFooter = styled.footer`
  display: flex;
  justify-content: flex-end;
  flex: none;
  height: 73px;
  padding: 10px 30px;
  border-top: 1px solid #cfd3d8;
`;

const grades = [
  'Select',
  'Dignissimos magni magnam incididunt quia quasi ipsam consequat Magnam sint molestiae quis in occaecat expedita et voluptatum non',
  'Fugit facilis minus laudantium enim voluptatum amet sit in est incididunt eiusmod',
  'Maiores eos sed dolor praesentium eius nihil aliquid a in',
  'Est fugit voluptatibus sit minus ea sint culpa natus omnis vel corrupti',
  'Dolorem harum incididunt sit iusto sint velit fugiat eu sed sed rerum ipsum corporis',
  'Cillum officiis ut proident veniam ex quos voluptatem ipsam sunt nemo sed',
  'Fugiat aperiam illum do in natus veritatis quis sunt delectus aliquip aut dolores',
  'Possimus fugit vero exercitationem exercitationem nihil dignissimos sed doloremque',
  'Nemo quas laborum aliquid molestias fugiat distinctio Debitis nostrum aliquid ut fuga Enim facere deleniti numquam et dolores aut',
  'Deserunt facilis optio iure pariatur Incididunt',
  'Dicta dolorem nulla soluta sit accusamus nulla nostrum dolore cupiditate tempora aut excepturi sed mollit ea esse dolor',
  'Consequuntur cum a eiusmod debitis sit deleniti eveniet placeat facere laborum',
  'Omnis facilis qui nostrud asperiores aut sunt pariatur Accusamus asperiores iste officia sunt',
  'Sit cupiditate voluptatem sunt ipsum omnis sint sunt praesentium beatae ad et consequat Commodo ullamco incidunt',
  'Earum omnis culpa perferendis possimus non cupidatat culpa eum sequi reprehenderit enim cumque quisquam occaecat incidunt',
  'Impedit ut id sit',
  'Dolor a ab veniam esse corporis sed rem sint',
  'Earum corrupti vitae est voluptas deserunt dolor eaque minus enim quae voluptate qui sed in laborum Voluptatibus vitae distinctio Rerum',
  'Id ut placeat even',
];

const forms = ['IIUI', 'Time', 'Form', 'depo', 'c12', 'Default', 'Policy', 'V2- f', 'V3 - f'];

const DemoLogo = () => (
  <svg width="85" height="33" viewBox="0 0 85 33">
    <rect width="85" height="33" fill="#a0a09b" />
    {[['D', 4, 6, -3], ['E', 24, 10, 4], ['M', 44, 5, -4], ['O', 62, 9, 5]].map(([letter, x, y, turn]) => (
      <g key={letter} transform={`rotate(${turn} ${x + 9} ${y + 9})`}>
        <rect x={x} y={y - 2} width="20" height="21" fill="#95804a" />
        <rect x={x} y={y} width="19" height="19" fill="#1f678c" />
        <text x={x + 9} y={y + 15} fill="#b0b4b4" fontSize="15" fontWeight="700" fontFamily="Roboto" textAnchor="middle">{letter}</text>
      </g>
    ))}
  </svg>
);

function EnrollmentPanel() {
  return (
    <Panel>
      <PanelHeader>Enrollment Form</PanelHeader>
      <PanelBody>
        <PanelGrid>
          <Field>
            <PanelLabel htmlFor="p-first">First Name:</PanelLabel>
            <PanelInput id="p-first" />
          </Field>
          <Field>
            <PanelLabel htmlFor="p-last">Last Name:</PanelLabel>
            <PanelInput id="p-last" />
          </Field>
          <Field>
            <PanelLabel htmlFor="p-email">Email:</PanelLabel>
            <PanelInput id="p-email" placeholder="Email" />
          </Field>
          <Field>
            <PanelLabel htmlFor="p-grade">Grade:</PanelLabel>
            <PanelSelect>
              <select id="p-grade"><option>Select</option></select>
              <ChevronDown size={20} />
            </PanelSelect>
            <GradeFrame />
            <ListFrame>
              <GradeList role="listbox" aria-label="Grade">
                {grades.map((g, i) => <li key={g} role="option" aria-selected={i === 0}>{g}</li>)}
                <Thumb $top={0} $height={82} />
              </GradeList>
            </ListFrame>
          </Field>
        </PanelGrid>
        <Inset>
          <SectionTitle $large $top={31}>Required Policies And Agreements</SectionTitle>
        </Inset>
        <Terms $top={21}>
          <p>In order to use this website, a user must</p>
          <p>you about the products/services on our</p>
        </Terms>
        <PanelCheck><input type="checkbox" /> I'VE READ THE ABOVE AND AGREE</PanelCheck>
        <Terms $top={15}>
          <p>Parties11 (the "Company") is committed</p>
          <p>us and to assist you in making informed</p>
        </Terms>
        <Terms $top={21}>
          <p>For purposes of this agreement, "Service"</p>
          <p>you, as a user of Service. By accepting</p>
          <p>Policy</p>
        </Terms>
        <Terms $top={21}>
          <p>What information do we collect?</p>
          <p>We collect Personal Information from</p>
          <p>information, which is used to generate</p>
          <SplitLine><span>provider, platform type, date/time</span><span>t</span></SplitLine>
          <p>you provide to us during student</p>
          <ul>
            <li>• Your sensitive personal information</li>
            <li>• Your child's sensitive personal data</li>
            <li>• Your personal contact information</li>
          </ul>
        </Terms>
        <Terms $top={21}>
          <p>How is your information used?</p>
          <p>We are the sole owners of the information</p>
          <p>information to anyone outside of our</p>
          <ul>
            <li>• effectively communicate with you</li>
            <li>• comply with licensing regulations</li>
          </ul>
        </Terms>
      </PanelBody>
      <PanelFooter><CloseButton $large>Close</CloseButton></PanelFooter>
      <Thumb $top={328} $height={157} />
      <PenButton $top={100} aria-label="Annotate"><PenLogo size={28} /></PenButton>
    </Panel>
  );
}

function App() {
  return (
    <>
      <GlobalStyle />
      <Desktop>
        <Browser>
          <TabStrip>
            <TabSearch aria-label="Search tabs"><ChevronDown size={15} strokeWidth={3} /></TabSearch>
            <Tab width={236} divider icon={<CalimaticLogo />} title="CALIMATIC" />
            <Tab width={238} divider fade icon={<GmailLogo />} title="Spam - faisalqa40@gmail.com - Gmail" />
            <Tab width={116} fade icon={<SheetsLogo />} title="BUG SHEET" />
            <Tab width={123} fade icon={<HandLogo />} title="Freeimage.host" />
            <Tab width={234} active icon={<CalimaticLogo />} title="Calimatic" />
            <Tab width={236} divider icon={<GptLogo />} title="Bug Title Refinement Guide" />
            <NewTab aria-label="New tab"><MdAdd size={16} /></NewTab>
            <WindowButtons>
              <svg width="12" height="12" viewBox="0 0 12 12"><path d="M1 6h10" stroke="currentColor" /></svg>
              <svg width="12" height="12" viewBox="0 0 12 12" fill="none" stroke="currentColor"><rect x="1" y="3" width="8" height="8" rx="1" /><path d="M3 1h6q2 0 2 2v6" /></svg>
              <svg width="12" height="12" viewBox="0 0 12 12"><path d="m1 1 10 10M11 1 1 11" stroke="currentColor" /></svg>
            </WindowButtons>
          </TabStrip>
          <ToolbarBack>
            <Toolbar>
              <NavButton aria-label="Back"><MdArrowBack size={18} /></NavButton>
              <NavButton aria-label="Forward"><MdArrowForward size={18} /></NavButton>
              <NavButton aria-label="Reload"><MdRefresh size={18} /></NavButton>
              <Omnibox>
                <SiteInfo><TuneLogo /></SiteInfo>
                <Address>portalv3.calibermatrix.com<span>/#/courses-enrollment-form-setup</span></Address>
                <OmniIcons><MdOutlineVpnKey size={18} /><MdStarBorder size={18} /></OmniIcons>
              </Omnibox>
              <Extensions>
                <FiBadge>FI</FiBadge>
                <PenLogo size={14} />
                <MdOutlineExtension size={18} />
              </Extensions>
              <ToolbarRule />
              <Avatar>f</Avatar>
              <MdMoreVert size={18} />
            </Toolbar>
          </ToolbarBack>
          <BookmarkBar />
          <Page>
            <PreviewPage />
            <DevTools />
          </Page>
        </Browser>
        <Browser>
          <TabStrip $large>
            <TabSearch $large aria-label="Search tabs"><ChevronDown size={18} strokeWidth={3} /></TabSearch>
            <Tab large active width={290} icon={<CalimaticLogo size={20} />} title="CALIMATIC" />
            <NewTab $large aria-label="New tab"><MdAdd size={19} /></NewTab>
            <ScreenRec>
              <svg width="14" height="14" viewBox="0 0 14 14"><circle cx="7" cy="7" r="6.400" fill="none" stroke="#f33" /><circle cx="7" cy="7" r="5" fill="#f00" /></svg>
              <span>screen<b>rec</b></span>
            </ScreenRec>
          </TabStrip>
          <ToolbarBack $large>
            <Toolbar $large>
              <NavButton $large aria-label="Back"><MdArrowBack size={22} /></NavButton>
              <NavButton $large $off aria-label="Forward"><MdArrowForward size={22} /></NavButton>
              <NavButton $large aria-label="Reload"><MdRefresh size={22} /></NavButton>
              <Omnibox $large>
                <SiteInfo $large><TuneLogo size={18} /></SiteInfo>
                <Address>core-lms.calibermatrix.com<span>/Dashboard</span></Address>
                <MdZoomOut size={22} />
              </Omnibox>
            </Toolbar>
          </ToolbarBack>
          <BookmarkBar large />
          <Dashboard>
            <SiteHeader><DemoLogo />Dashboard</SiteHeader>
            <SubHeader />
            <DashBody>
              <AddButton>Add Enrollment Form</AddButton>
              <Note><b>Note:</b> You have the option</Note>
              <FormsTable>
                <colgroup><col width="83" /><col /></colgroup>
                <thead><tr><th># <span>▲</span></th><th>Enroll</th></tr></thead>
                <tbody>
                  {forms.map((name, i) => (
                    <tr key={name}>
                      <td>{i + 1}</td>
                      <td>{i > 6 ? <a href="#form">{name}</a> : name}</td>
                    </tr>
                  ))}
                </tbody>
              </FormsTable>
              <Pager>
                <span>Page</span>
                <button>‹</button>
                <input defaultValue="1" aria-label="Page number" />
                <button>›</button>
              </Pager>
            </DashBody>
            <EnrollmentPanel />
            <RoundClose aria-label="Close panel"><X size={36} strokeWidth={1.5} /></RoundClose>
          </Dashboard>
        </Browser>
      </Desktop>
    </>
  );
}

export default App;
